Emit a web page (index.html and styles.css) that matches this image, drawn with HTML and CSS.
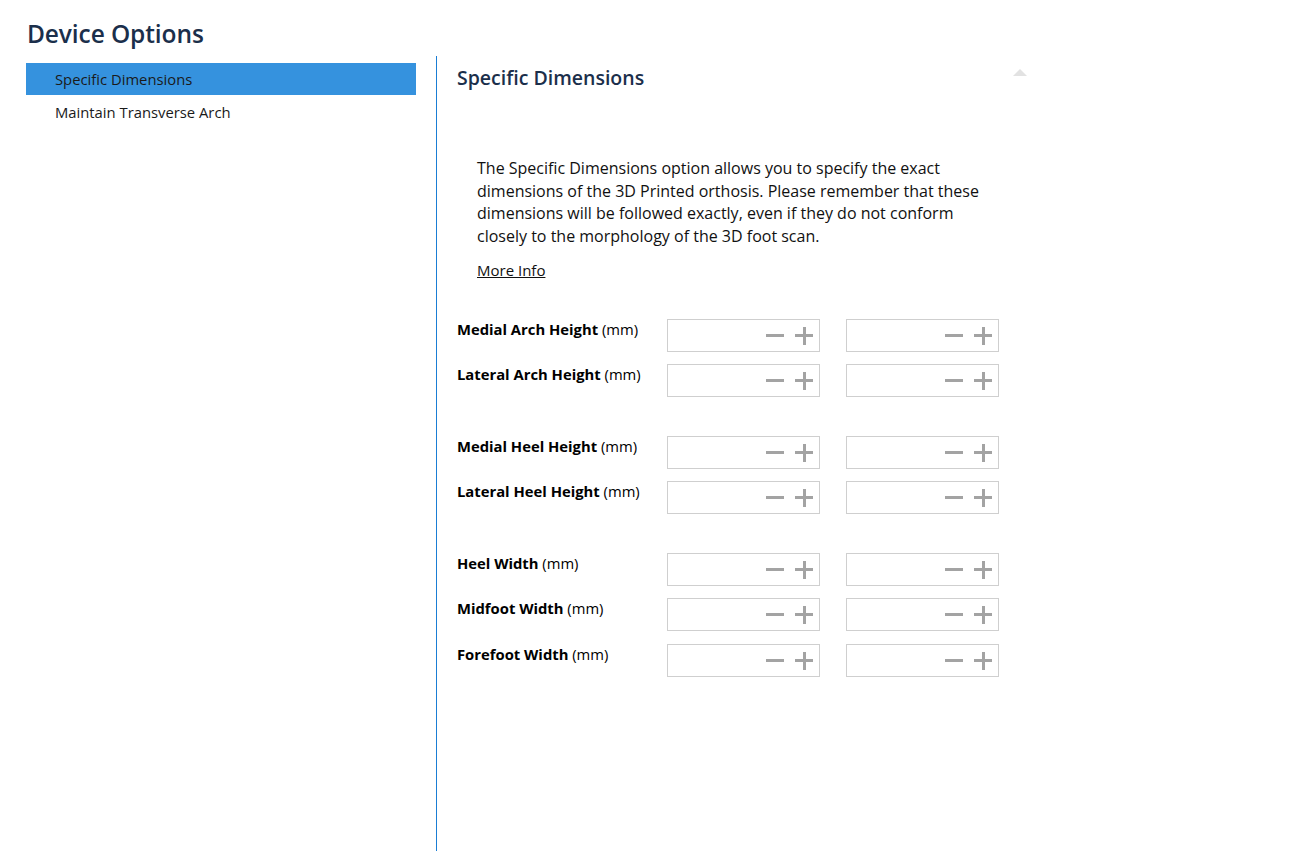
FILE: index.html
```html
<!DOCTYPE html>
<html>
<head>
<meta charset="utf-8">
<link rel="stylesheet" href="styles.css">
</head>
<body>
<h1 class="page-title">Device Options</h1>
<div class="layout">
  <nav class="sidebar">
    <div class="nav-item active">Specific Dimensions</div>
    <div class="nav-item">Maintain Transverse Arch</div>
  </nav>
  <main class="content">
    <div class="section-head">
      <h2 class="section-title">Specific Dimensions</h2>
      <span class="collapse-caret"></span>
    </div>
    <div class="description">
      <p>The Specific Dimensions option allows you to specify the exact dimensions of the 3D Printed orthosis. Please remember that these dimensions will be followed exactly, even if they do not conform closely to the morphology of the 3D foot scan.</p>
      <a class="more-info" href="#">More Info</a>
    </div>
    <div class="form">
      <div class="group">
        <div class="row"><div class="label"><b>Medial Arch Height</b> (mm)</div><div class="spin"><span class="minus"></span><span class="plus"></span></div><div class="spin"><span class="minus"></span><span class="plus"></span></div></div>
        <div class="row"><div class="label"><b>Lateral Arch Height</b> (mm)</div><div class="spin"><span class="minus"></span><span class="plus"></span></div><div class="spin"><span class="minus"></span><span class="plus"></span></div></div>
      </div>
      <div class="group">
        <div class="row"><div class="label"><b>Medial Heel Height</b> (mm)</div><div class="spin"><span class="minus"></span><span class="plus"></span></div><div class="spin"><span class="minus"></span><span class="plus"></span></div></div>
        <div class="row"><div class="label"><b>Lateral Heel Height</b> (mm)</div><div class="spin"><span class="minus"></span><span class="plus"></span></div><div class="spin"><span class="minus"></span><span class="plus"></span></div></div>
      </div>
      <div class="group">
        <div class="row"><div class="label"><b>Heel Width</b> (mm)</div><div class="spin"><span class="minus"></span><span class="plus"></span></div><div class="spin"><span class="minus"></span><span class="plus"></span></div></div>
        <div class="row"><div class="label"><b>Midfoot Width</b> (mm)</div><div class="spin"><span class="minus"></span><span class="plus"></span></div><div class="spin"><span class="minus"></span><span class="plus"></span></div></div>
        <div class="row"><div class="label"><b>Forefoot Width</b> (mm)</div><div class="spin"><span class="minus"></span><span class="plus"></span></div><div class="spin"><span class="minus"></span><span class="plus"></span></div></div>
      </div>
    </div>
  </main>
</div>
</body>
</html>
```
FILE: styles.css
```css
html, body {
  margin: 0;
  padding: 0;
  background: #ffffff;
  height: 100%;
}
body {
  font-family: "Open Sans", "Noto Sans", sans-serif;
  color: #111;
  display: flex;
  flex-direction: column;
  overflow: hidden;
}
.page-title {
  margin: 0;
  padding: 18px 0 0 27px;
  height: 38px;
  font-size: 24.5px;
  font-weight: 600;
  color: #1b2f4b;
  line-height: 32px;
  letter-spacing: -0.1px;
}
.layout {
  flex: 1;
  display: flex;
}
.sidebar {
  width: 390px;
  margin-left: 26px;
  padding-top: 7px;
}
.nav-item {
  height: 32px;
  line-height: 33px;
  padding-left: 29px;
  font-size: 14.8px;
  color: #1a1a1a;
}
.nav-item + .nav-item {
  line-height: 34px;
}
.nav-item.active {
  background: #3592de;
}
.content {
  margin-left: 20px;
  border-left: 1px solid #1a7dd4;
  padding-left: 20px;
  width: 572px;
}
.section-head {
  display: flex;
  justify-content: space-between;
  align-items: flex-start;
  padding-top: 8px;
}
.section-title {
  margin: 0;
  font-size: 19.5px;
  font-weight: 600;
  color: #1b2f4b;
  line-height: 28px;
}
.collapse-caret {
  width: 0;
  height: 0;
  border-left: 7px solid transparent;
  border-right: 7px solid transparent;
  border-bottom: 7px solid #e2e2e2;
  margin-top: 5px;
  margin-right: 2px;
}
.description {
  padding: 65px 0 0 20px;
  width: 510px;
}
.description p {
  margin: 0;
  font-size: 16px;
  line-height: 22.5px;
  color: #111;
}
.more-info {
  display: inline-block;
  margin-top: 13px;
  font-size: 15px;
  color: #111;
  text-decoration: underline;
}
.form {
  padding-top: 38px;
  display: flex;
  flex-direction: column;
  gap: 39px;
}
.group {
  display: flex;
  flex-direction: column;
  gap: 12px;
}
.group:last-child .row:last-child {
  margin-top: 1px;
}
.row {
  display: flex;
  align-items: flex-start;
  gap: 26px;
}
.label {
  width: 184px;
  font-size: 14.8px;
  line-height: 20px;
  color: #000;
  white-space: nowrap;
}
.label b {
  font-weight: 700;
}
.spin {
  width: 153px;
  height: 33px;
  box-sizing: border-box;
  border: 1px solid #cfcfcf;
  background: #fff;
  display: flex;
  align-items: center;
  justify-content: flex-end;
  gap: 11px;
  padding-right: 6px;
}
.minus, .plus {
  position: relative;
  width: 18px;
  height: 18px;
  display: block;
}
.minus::before, .plus::before, .plus::after {
  content: "";
  position: absolute;
  background: #a3a3a3;
}
.minus::before {
  left: 0;
  right: 0;
  top: 7px;
  height: 3px;
}
.plus::before {
  left: 0;
  right: 0;
  top: 7.5px;
  height: 3px;
}
.plus::after {
  top: 0;
  bottom: 0;
  left: 7.5px;
  width: 3px;
}
```
